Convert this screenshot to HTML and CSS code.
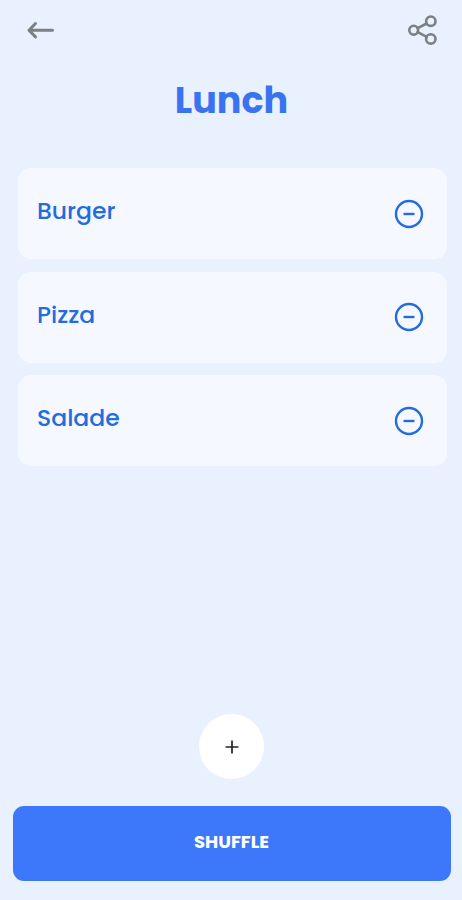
FILE: index.html
```html
<!DOCTYPE html>
<html lang="en">
<head>
    <meta charset="UTF-8">
    <title>Lunch</title>
    <link rel="stylesheet" href="styles.css">
</head>
<body>
<div class="app">
    <div class="topbar">
        <a href="#"><svg class="icon" width="30" height="30" viewBox="0 0 30 30">
            <path d="M27.500 15.200H4.500M10.500 8.500L4 15.200l6.500 6.700"/>
        </svg></a>
        <a href="#"><svg class="icon share" width="30" height="30" viewBox="0 0 30 30">
            <circle cx="5.700" cy="15.200" r="4.400"/>
            <circle cx="22.800" cy="6.200" r="4.700"/>
            <circle cx="22.800" cy="23.900" r="4.700"/>
            <path d="M9.700 13.200l9-4.700M9.700 17.200l9 4.700"/>
        </svg></a>
    </div>
    <h1>Lunch</h1>
    <ul class="list">
        <li>
            <span>Burger</span>
            <svg class="remove" width="30" height="30" viewBox="0 0 30 30">
                <circle cx="15" cy="15" r="13"/>
                <path d="M9.500 15h11"/>
            </svg>
        </li>
        <li>
            <span>Pizza</span>
            <svg class="remove" width="30" height="30" viewBox="0 0 30 30">
                <circle cx="15" cy="15" r="13"/>
                <path d="M9.500 15h11"/>
            </svg>
        </li>
        <li>
            <span>Salade</span>
            <svg class="remove" width="30" height="30" viewBox="0 0 30 30">
                <circle cx="15" cy="15" r="13"/>
                <path d="M9.500 15h11"/>
            </svg>
        </li>
    </ul>
    <div class="footer">
        <button class="add">
            <svg width="14" height="14" viewBox="0 0 14 14">
                <path d="M.5 7h13M7 .5v13"/>
            </svg>
        </button>
        <button class="shuffle">SHUFFLE</button>
    </div>
</div>
</body>
</html>
```

FILE: styles.css
```css
* {
    margin: 0;
    padding: 0;
    box-sizing: border-box;
}

body {
    background-color: #e9f1ff;
    font-family: Poppins, Inter, "Liberation Sans", sans-serif;
}

ul {
    list-style: none;
}

svg {
    display: block;
    fill: none;
}

button {
    border: 0;
    font-family: inherit;
    cursor: pointer;
}

.app {
    display: flex;
    flex-direction: column;
    height: 900px;
}

.topbar {
    display: flex;
    justify-content: space-between;
    height: 60px;
    padding: 15px 24px 0 25px;
}

.icon {
    stroke: #7d8083;
    stroke-width: 3;
    stroke-linecap: round;
    stroke-linejoin: round;
}

.share {
    stroke-width: 2.6;
}

h1 {
    height: 108px;
    padding: 20px 0 0 1px;
    text-align: center;
    font-size: 36.5px;
    line-height: 42px;
    font-weight: 700;
    color: #3a73f0;
}

.list {
    display: flex;
    flex-direction: column;
    gap: 12.5px;
    padding: 0 15.5px 0 17.5px;
}

.list li {
    display: flex;
    justify-content: space-between;
    align-items: center;
    height: 91px;
    padding: 0 22.5px 0 19.5px;
    border-radius: 13px;
    background-color: #f5f9ff;
    font-size: 23.5px;
    font-weight: 500;
    line-height: 30px;
    color: #246be0;
}

.list span {
    padding-bottom: 5px;
}

.remove {
    stroke: #246be0;
    stroke-width: 2.4;
}

.footer {
    display: flex;
    flex-direction: column;
    align-items: center;
    gap: 27px;
    margin-top: auto;
    padding: 0 11.5px 19px 12.5px;
}

.add {
    display: flex;
    justify-content: center;
    align-items: center;
    width: 65px;
    height: 65px;
    border-radius: 50%;
    background-color: #fff;
}

.add svg {
    stroke: #222;
    stroke-width: 1.7;
}

.shuffle {
    width: 100%;
    height: 75px;
    padding-bottom: 4px;
    border-radius: 11px;
    background-color: #3d77fa;
    font-size: 18px;
    font-weight: 700;
    color: #fff;
}
```
